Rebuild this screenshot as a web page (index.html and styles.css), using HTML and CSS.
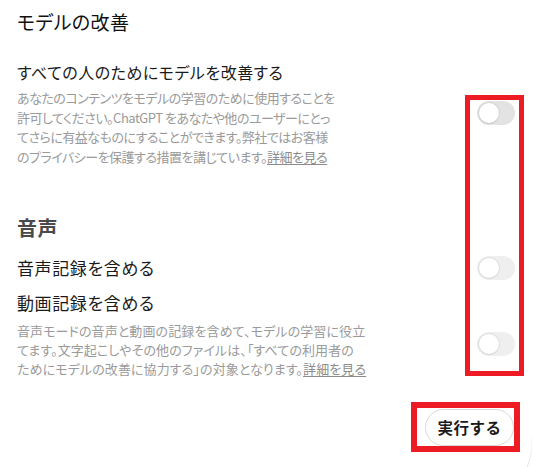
FILE: index.html
```html
<!DOCTYPE html>
<html lang="ja">
<head>
<meta charset="utf-8">
<link rel="stylesheet" href="styles.css">
</head>
<body>
<div class="dialog">
  <h1 class="title">モデルの改善</h1>

  <div class="row row-improve">
    <div class="text">
      <div class="label">すべての人のためにモデルを改善する</div>
      <p class="desc desc-improve">あなたのコンテンツをモデルの学習のために使用することを<br>許可してください。ChatGPT をあなたや他のユーザーにとっ<br>てさらに有益なものにすることができます。弊社ではお客様<br>のプライバシーを保護する措置を講じています。<a class="link" href="#">詳細を見る</a></p>
    </div>
    <span class="toggle toggle-main"><span class="knob"></span></span>
  </div>

  <h2 class="section">音声</h2>

  <div class="row row-audio">
    <div class="label label-wide">音声記録を含める</div>
    <span class="toggle toggle-audio"><span class="knob"></span></span>
  </div>

  <div class="row row-video">
    <div class="text">
      <div class="label label-wide">動画記録を含める</div>
      <p class="desc desc-video">音声モードの音声と動画の記録を含めて、モデルの学習に役立<br>てます。文字起こしやその他のファイルは、「すべての利用者の<br>ためにモデルの改善に協力する」の対象となります。<a class="link" href="#">詳細を見る</a></p>
    </div>
    <span class="toggle toggle-video"><span class="knob"></span></span>
  </div>

  <div class="actions">
    <button class="run-btn" type="button">実行する</button>
  </div>

  <div class="mark mark-toggles"></div>
  <div class="mark mark-button"></div>
</div>
</body>
</html>
```

FILE: styles.css
```css
* { box-sizing: border-box; }

html, body {
  margin: 0;
  padding: 0;
  background: #ffffff;
  overflow: hidden;
}

body {
  font-family: "Noto Sans CJK JP", "Noto Sans", sans-serif;
  width: 534px;
  height: 467px;
}

.dialog {
  position: relative;
  width: 534px;
  height: 467px;
  overflow: hidden;
  padding: 9px 19px 0 17px;
  background: #ffffff;
}

/* rounded dialog corner peeking in at the bottom right */
.dialog::after {
  content: "";
  position: absolute;
  right: 2px;
  bottom: -38px;
  width: 120px;
  height: 120px;
  border-bottom: 1px solid #d8d8d8;
  border-right: 1px solid #d8d8d8;
  border-bottom-right-radius: 60px;
  border-top: 0;
  border-left: 0;
  pointer-events: none;
  -webkit-mask-image: linear-gradient(to bottom, transparent 40%, #000 75%);
  mask-image: linear-gradient(to bottom, transparent 40%, #000 75%);
}

.title {
  margin: 0;
  font-size: 19px;
  line-height: 26px;
  font-weight: 400;
  color: #111111;
  font-feature-settings: "palt";
  letter-spacing: 0.4px;
}

.row {
  display: flex;
  justify-content: space-between;
  align-items: flex-start;
}

.row-improve { margin-top: 25px; }

.label {
  font-size: 16px;
  line-height: 24px;
  color: #1a1a1a;
  white-space: nowrap;
  font-feature-settings: "palt";
  letter-spacing: 0.5px;
}

.label-wide {
  font-size: 17px;
  letter-spacing: 0.6px;
}

.desc {
  margin: 4px 0 0;
  font-size: 13px;
  line-height: 19.7px;
  color: #9a9a9a;
  white-space: nowrap;
  font-feature-settings: "palt";
}

.desc-improve {
  letter-spacing: -0.5px;
}

.desc-video {
  margin-top: 6px;
  line-height: 19px;
  letter-spacing: 0.1px;
}

.link {
  color: #8c8c8c;
  text-decoration: underline;
  text-underline-offset: 2px;
}

.toggle {
  position: relative;
  flex: none;
  display: block;
  width: 38px;
  height: 24px;
  border-radius: 12px;
  background: #e3e3e3;
}

.toggle-main { margin-top: 41px; }
.toggle-audio { margin-top: 0; background: #efefef; }
.toggle-video { margin-top: 41px; background: #efefef; }

.knob {
  position: absolute;
  left: 2px;
  top: 2px;
  width: 20px;
  height: 20px;
  border-radius: 50%;
  background: #ffffff;
  box-shadow: 0 0 0 1px rgba(0, 0, 0, 0.06), 0 1px 1px rgba(0, 0, 0, 0.05);
}

.section {
  margin: 47px 0 0;
  font-size: 20px;
  line-height: 28px;
  font-weight: 700;
  color: #4a4a4a;
  letter-spacing: 0.5px;
}

.row-audio { margin-top: 14px; align-items: center; }
.row-video { margin-top: 11px; }

.actions {
  display: flex;
  justify-content: flex-end;
  margin-top: 31px;
  padding-right: 1px;
}

.run-btn {
  font-family: "Noto Sans CJK JP", "Noto Sans", sans-serif;
  font-size: 15.5px;
  font-weight: 700;
  color: #1a1a1a;
  background: #ffffff;
  border: 1px solid #d9d9d9;
  border-radius: 19px;
  height: 37px;
  width: 89px;
  padding: 0;
  letter-spacing: 0.5px;
}

.mark {
  position: absolute;
  border-style: solid;
  border-color: #ed1c24;
}

.mark-toggles {
  left: 465px;
  top: 95px;
  width: 59px;
  height: 281px;
  border-width: 5px;
}

.mark-button {
  left: 411px;
  top: 402px;
  width: 109px;
  height: 50px;
  border-width: 6px;
}
```
